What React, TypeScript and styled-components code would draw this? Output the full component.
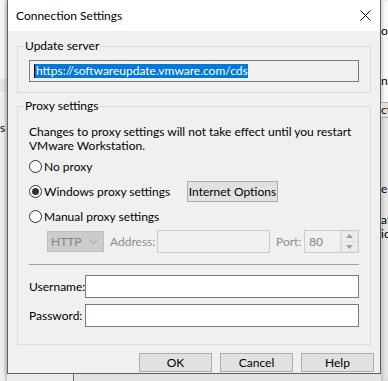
import React from 'react';
import styled, { createGlobalStyle } from 'styled-components';

const GlobalStyle = createGlobalStyle`
  html, body {
    margin: 0;
    padding: 0;
  }
  body {
    width: 388px;
    height: 381px;
    overflow: hidden;
    font-family: Lato, "Liberation Sans", sans-serif;
    font-size: 12px;
    line-height: 14px;
    color: #000;
  }
`;

const Screen = styled.div`
  display: flex;
  align-items: flex-start;
  width: 388px;
  height: 381px;
  overflow: hidden;
  background: #f0f0f0;
`;

// bits of the window behind the dialog
const LeftStrip = styled.div`
  width: 7px;
  height: 381px;
  flex-shrink: 0;
  overflow: hidden;
  background: linear-gradient(to bottom, #f7f7f7 0, #f7f7f7 79px, #e6e6e6 79px, #e6e6e6 92px, #f0f0f0 92px);
  box-shadow: inset -2px 0 2px rgba(0, 0, 0, 0.12);
`;

const RightStrip = styled.div`
  width: 7px;
  height: 381px;
  flex-shrink: 0;
  overflow: hidden;
  background: linear-gradient(to bottom, #fafafa 0, #fafafa 104px, #e4e4e4 104px);
  box-shadow: inset 2px 0 3px rgba(0, 0, 0, 0.15);
`;

const Peek = styled.div<{ $top: number; $boxed?: boolean }>`
  margin-top: ${({ $top }) => $top}px;
  height: 14px;
  white-space: nowrap;
  ${({ $boxed }) => ($boxed ? 'border-top: 1px solid #adadad; border-bottom: 1px solid #adadad; background: #e1e1e1;' : '')}
`;

const Middle = styled.div`
  width: 374px;
  flex-shrink: 0;
  display: flex;
  flex-direction: column;
`;

const BelowDialog = styled.div`
  height: 7px;
  background: linear-gradient(to right, #ececec 0, #ececec 66px, #6b6b6b 66px, #6b6b6b 67px, #e3e3e3 67px);
`;

const Dialog = styled.div`
  height: 374px;
  box-sizing: border-box;
  border: 1px solid #5f5f5f;
  border-top: none;
  background: #f0f0f0;
  display: flex;
  flex-direction: column;
  overflow: hidden;
  box-shadow: 0 2px 6px rgba(0, 0, 0, 0.28);
`;

const TitleBar = styled.div`
  height: 31px;
  flex-shrink: 0;
  background: #fff;
  display: flex;
  align-items: center;
  padding-left: 8px;
`;

const Title = styled.div`
  flex: 1;
`;

const CloseButton = styled.div`
  width: 29px;
  height: 31px;
  display: flex;
  align-items: center;
  justify-content: center;
`;

const Body = styled.div`
  padding: 8px 9px 0 9px;
  display: flex;
  flex-direction: column;
`;

const GroupBox = styled.fieldset<{ $gap?: number }>`
  margin: ${({ $gap }) => $gap ?? 0}px 0 0 0;
  padding: 0;
  min-width: 0;
  border: 1px solid #dcdcdc;
`;

const GroupTitle = styled.legend`
  display: block;
  height: 14px;
  margin-left: 6px;
  padding: 0 1px;
`;

const GroupBody = styled.div<{ $pad: string }>`
  padding: ${({ $pad }) => $pad};
  display: flex;
  flex-direction: column;
`;

const ServerBox = styled.div`
  height: 22px;
  box-sizing: border-box;
  border: 1px solid #7a7a7a;
  background: #f0f0f0;
  padding-left: 4px;
  display: flex;
  align-items: center;
`;

const Selected = styled.span`
  background: #0078d7;
  color: #fff;
  padding-left: 1px;
  border-left: 1px solid #000;
`;

const Note = styled.div`
  margin-top: 6px;
  height: 28px;
  white-space: nowrap;
`;

const RadioList = styled.div`
  margin-top: 3px;
  display: flex;
  flex-direction: column;
  gap: 4px;
`;

const RadioRow = styled.div`
  height: 21px;
  display: flex;
  align-items: center;
`;

const RadioCircle = styled.span<{ $checked?: boolean }>`
  width: 13px;
  height: 13px;
  box-sizing: border-box;
  border: 1px solid #333;
  border-radius: 50%;
  background: #fff;
  display: flex;
  align-items: center;
  justify-content: center;
  flex-shrink: 0;

  &::after {
    content: '';
    width: 7px;
    height: 7px;
    border-radius: 50%;
    background: #333;
    display: ${({ $checked }) => ($checked ? 'block' : 'none')};
  }
`;

const RadioLabel = styled.span<{ $width?: number }>`
  margin-left: 2px;
  ${({ $width }) => ($width ? `width: ${$width}px;` : '')}
  white-space: nowrap;
`;

const PushButton = styled.div<{ $width: number; $height: number }>`
  width: ${({ $width }) => $width}px;
  height: ${({ $height }) => $height}px;
  box-sizing: border-box;
  border: 1px solid #adadad;
  background: #e1e1e1;
  display: flex;
  align-items: center;
  justify-content: center;
  white-space: nowrap;
`;

const ManualRow = styled.div`
  margin-top: 3px;
  padding-left: 18px;
  height: 23px;
  display: flex;
  align-items: center;
`;

const Combo = styled.div`
  width: 57px;
  height: 21px;
  box-sizing: border-box;
  border: 1px solid #bfbfbf;
  background: #cccccc;
  color: #838383;
  display: flex;
  align-items: center;
  justify-content: space-between;
  padding: 0 5px 0 3px;
`;

const DimLabel = styled.span<{ $width: number }>`
  width: ${({ $width }) => $width}px;
  margin-left: 6px;
  color: #8d8d8d;
  white-space: nowrap;
`;

const DimField = styled.div<{ $width: number }>`
  width: ${({ $width }) => $width}px;
  height: 23px;
  box-sizing: border-box;
  border: 1px solid #cccccc;
  background: #f0f0f0;
  color: #838383;
  display: flex;
  align-items: center;
  padding-left: 4px;
`;

const Spin = styled.div`
  margin-left: auto;
  width: 17px;
  height: 21px;
  display: flex;
  flex-direction: column;
  border-left: 1px solid #d9d9d9;
`;

const SpinHalf = styled.div`
  flex: 1;
  display: flex;
  align-items: center;
  justify-content: center;
  border: 1px solid #e3e3e3;
  background: #ececec;
`;

const Separator = styled.div`
  margin-top: 11px;
  height: 1px;
  background: #a0a0a0;
`;

const FieldRow = styled.div<{ $gap: number }>`
  margin-top: ${({ $gap }) => $gap}px;
  height: 23px;
  display: flex;
  align-items: center;
`;

const FieldLabel = styled.span`
  width: 56px;
  white-space: nowrap;
`;

const TextField = styled.div`
  flex: 1;
  height: 23px;
  box-sizing: border-box;
  border: 1px solid #7a7a7a;
  background: #fff;
`;

const ButtonRow = styled.div`
  margin: 8px -3px 0 0;
  display: flex;
  justify-content: flex-end;
  gap: 8px;
`;

const CloseIcon = () => (
  <svg width="11" height="11" viewBox="0 0 11 11">
    <path d="M0.5 0.5 L10.5 10.5 M10.5 0.5 L0.5 10.5" stroke="#000" strokeWidth="1" />
  </svg>
);

const ChevronDown = () => (
  <svg width="9" height="6" viewBox="0 0 9 6">
    <path d="M0.5 0.5 L4.5 4.5 L8.5 0.5" stroke="#9a9a9a" strokeWidth="1" fill="none" />
  </svg>
);

const Arrow = ({ up }: { up?: boolean }) => (
  <svg width="7" height="4" viewBox="0 0 7 4">
    <path d={up ? 'M0 4 L3.5 0 L7 4 Z' : 'M0 0 L3.5 4 L7 0 Z'} fill="#a0a0a0" />
  </svg>
);

const Radio = ({ label, checked, width }: { label: string; checked?: boolean; width?: number }) => (
  <>
    <RadioCircle $checked={checked} />
    <RadioLabel $width={width}>{label}</RadioLabel>
  </>
);

const App = () => {
  return (
    <Screen>
      <GlobalStyle />
      <LeftStrip>
        <Peek $top={121}>s</Peek>
      </LeftStrip>
      <Middle>
        <Dialog>
          <TitleBar>
            <Title>Connection Settings</Title>
            <CloseButton>
              <CloseIcon />
            </CloseButton>
          </TitleBar>
          <Body>
            <GroupBox>
              <GroupTitle>Update server</GroupTitle>
              <GroupBody $pad="7px 11px 10px 11px">
                <ServerBox>
                  <Selected>https://softwareupdate.vmware.com/cds</Selected>
                </ServerBox>
              </GroupBody>
            </GroupBox>
            <GroupBox $gap={6}>
              <GroupTitle>Proxy settings</GroupTitle>
              <GroupBody $pad="6px 11px 17px 11px">
                <Note>
                  Changes to proxy settings will not take effect until you restart
                  <br />
                  VMware Workstation.
                </Note>
                <RadioList>
                  <RadioRow>
                    <Radio label="No proxy" />
                  </RadioRow>
                  <RadioRow>
                    <Radio label="Windows proxy settings" checked width={143} />
                    <PushButton $width={91} $height={21}>Internet Options</PushButton>
                  </RadioRow>
                  <RadioRow>
                    <Radio label="Manual proxy settings" />
                  </RadioRow>
                </RadioList>
                <ManualRow>
                  <Combo>
                    HTTP
                    <ChevronDown />
                  </Combo>
                  <DimLabel $width={47}>Address:</DimLabel>
                  <DimField $width={113} />
                  <DimLabel $width={28}>Port:</DimLabel>
                  <DimField $width={55}>
                    80
                    <Spin>
                      <SpinHalf>
                        <Arrow up />
                      </SpinHalf>
                      <SpinHalf>
                        <Arrow />
                      </SpinHalf>
                    </Spin>
                  </DimField>
                </ManualRow>
                <Separator />
                <FieldRow $gap={10}>
                  <FieldLabel>Username:</FieldLabel>
                  <TextField />
                </FieldRow>
                <FieldRow $gap={6}>
                  <FieldLabel>Password:</FieldLabel>
                  <TextField />
                </FieldRow>
              </GroupBody>
            </GroupBox>
            <ButtonRow>
              <PushButton $width={73} $height={19}>OK</PushButton>
              <PushButton $width={73} $height={19}>Cancel</PushButton>
              <PushButton $width={73} $height={19}>Help</PushButton>
            </ButtonRow>
          </Body>
        </Dialog>
        <BelowDialog />
      </Middle>
      <RightStrip>
        <Peek $top={24}>on</Peek>
        <Peek $top={36}>ng</Peek>
        <Peek $top={14} $boxed>ct</Peek>
        <Peek $top={64}>e</Peek>
        <Peek $top={17}>at</Peek>
        <Peek $top={0}>io</Peek>
      </RightStrip>
    </Screen>
  );
};

export default App;
